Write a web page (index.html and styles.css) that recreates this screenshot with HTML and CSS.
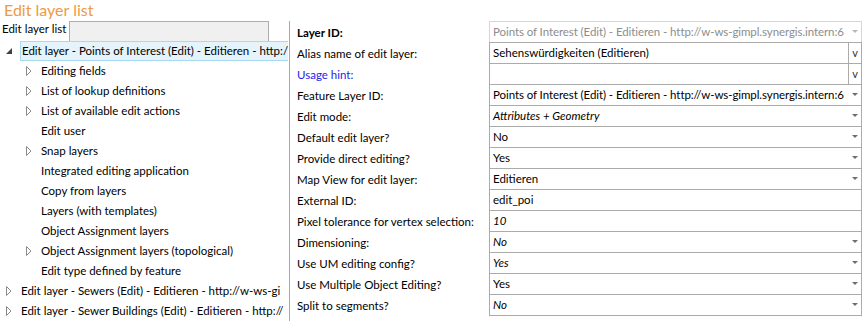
FILE: index.html
```html
<!DOCTYPE html>
<html>
<head>
<meta charset="utf-8">
<link rel="stylesheet" href="styles.css">
</head>
<body>
<div class="title">Edit layer list</div>
<div class="main">
  <div class="left">
    <div class="search">
      <span class="search-label">Edit layer list</span>
      <span class="search-box"></span>
    </div>
    <div class="tree">
      <div class="node root selected"><span class="tw"><svg width="7" height="6" viewBox="0 0 7 6"><polygon points="6,0 6,6 0,6" fill="#404040"/></svg></span><span class="tx">Edit layer - Points of Interest (Edit) - Editieren - http:/</span></div>
      <div class="node child"><span class="tw"><svg width="6" height="10" viewBox="0 0 6 10"><polygon points="0.5,0.5 5,5 0.5,9.5" fill="none" stroke="#8a8a8a"/></svg></span><span class="tx">Editing fields</span></div>
      <div class="node child"><span class="tw"><svg width="6" height="10" viewBox="0 0 6 10"><polygon points="0.5,0.5 5,5 0.5,9.5" fill="none" stroke="#8a8a8a"/></svg></span><span class="tx">List of lookup definitions</span></div>
      <div class="node child"><span class="tw"><svg width="6" height="10" viewBox="0 0 6 10"><polygon points="0.5,0.5 5,5 0.5,9.5" fill="none" stroke="#8a8a8a"/></svg></span><span class="tx">List of available edit actions</span></div>
      <div class="node child"><span class="tw"></span><span class="tx">Edit user</span></div>
      <div class="node child"><span class="tw"><svg width="6" height="10" viewBox="0 0 6 10"><polygon points="0.5,0.5 5,5 0.5,9.5" fill="none" stroke="#8a8a8a"/></svg></span><span class="tx">Snap layers</span></div>
      <div class="node child"><span class="tw"></span><span class="tx">Integrated editing application</span></div>
      <div class="node child"><span class="tw"></span><span class="tx">Copy from layers</span></div>
      <div class="node child"><span class="tw"></span><span class="tx">Layers (with templates)</span></div>
      <div class="node child"><span class="tw"></span><span class="tx">Object Assignment layers</span></div>
      <div class="node child"><span class="tw"><svg width="6" height="10" viewBox="0 0 6 10"><polygon points="0.5,0.5 5,5 0.5,9.5" fill="none" stroke="#8a8a8a"/></svg></span><span class="tx">Object Assignment layers (topological)</span></div>
      <div class="node child"><span class="tw"></span><span class="tx">Edit type defined by feature</span></div>
      <div class="node root"><span class="tw"><svg width="6" height="10" viewBox="0 0 6 10"><polygon points="0.5,0.5 5,5 0.5,9.5" fill="none" stroke="#8a8a8a"/></svg></span><span class="tx">Edit layer - Sewers (Edit) - Editieren - http://w-ws-gi</span></div>
      <div class="node root"><span class="tw"><svg width="6" height="10" viewBox="0 0 6 10"><polygon points="0.5,0.5 5,5 0.5,9.5" fill="none" stroke="#8a8a8a"/></svg></span><span class="tx">Edit layer - Sewer Buildings (Edit) - Editieren - http://</span></div>
    </div>
  </div>
  <div class="right">
    <div class="form">
      <div class="lbl bold">Layer ID:</div>
      <div class="val first disabled"><span class="vt tight">Points of Interest (Edit) - Editieren - http://w-ws-gimpl.synergis.intern:6</span><span class="dd"></span></div>

      <div class="lbl">Alias name of edit layer:</div>
      <div class="val"><span class="vt">Sehenswürdigkeiten (Editieren)</span><span class="vbtn">v</span></div>

      <div class="lbl hint">Usage hint:</div>
      <div class="val"><span class="vt"></span><span class="vbtn">v</span></div>

      <div class="lbl">Feature Layer ID:</div>
      <div class="val"><span class="vt tight">Points of Interest (Edit) - Editieren - http://w-ws-gimpl.synergis.intern:6</span><span class="dd"></span></div>

      <div class="lbl">Edit mode:</div>
      <div class="val"><span class="vt it">Attributes + Geometry</span><span class="dd"></span></div>

      <div class="lbl">Default edit layer?</div>
      <div class="val"><span class="vt">No</span><span class="dd"></span></div>

      <div class="lbl">Provide direct editing?</div>
      <div class="val"><span class="vt">Yes</span><span class="dd"></span></div>

      <div class="lbl">Map View for edit layer:</div>
      <div class="val"><span class="vt">Editieren</span><span class="dd"></span></div>

      <div class="lbl">External ID:</div>
      <div class="val"><span class="vt">edit_poi</span></div>

      <div class="lbl">Pixel tolerance for vertex selection:</div>
      <div class="val"><span class="vt it">10</span></div>

      <div class="lbl">Dimensioning:</div>
      <div class="val"><span class="vt it">No</span><span class="dd"></span></div>

      <div class="lbl">Use UM editing config?</div>
      <div class="val"><span class="vt it">Yes</span><span class="dd"></span></div>

      <div class="lbl">Use Multiple Object Editing?</div>
      <div class="val"><span class="vt">Yes</span><span class="dd"></span></div>

      <div class="lbl">Split to segments?</div>
      <div class="val last"><span class="vt it">No</span><span class="dd"></span></div>
    </div>
  </div>
</div>
</body>
</html>
```
FILE: styles.css
```css
* { box-sizing: border-box; }
html, body {
  margin: 0;
  padding: 0;
  background: #ffffff;
  width: 864px;
  height: 321px;
  overflow: hidden;
}
body {
  font-family: Lato, "Open Sans", sans-serif;
  font-size: 11.5px;
  color: #000;
}
.title {
  height: 21px;
  line-height: 20px;
  padding-left: 4px;
  font-size: 16px;
  color: #ee9a45;
}
.main {
  display: flex;
  height: 300px;
}
.left {
  width: 290px;
  flex: none;
  border-right: 1px solid #a9a9a9;
  overflow: hidden;
}
.search {
  display: flex;
  height: 20px;
  align-items: flex-start;
}
.search-label {
  padding-left: 2px;
  width: 69px;
  flex: none;
  line-height: 16px;
  white-space: nowrap;
}
.search-box {
  width: 200px;
  flex: none;
  height: 21px;
  background: #f0f0f0;
  border: 1px solid #adadad;
}
.tree {
  width: 288px;
  overflow: hidden;
}
.node {
  display: flex;
  align-items: center;
  height: 20px;
  white-space: nowrap;
}
.node .tw {
  width: 14px;
  flex: none;
  display: flex;
  align-items: center;
}
.node .tx {
  padding-left: 1px;
  line-height: 18px;
}
.root { padding-left: 6px; }
.child { padding-left: 26px; }
.selected .tx {
  background: #e5f3fb;
  border: 1px solid #a8d9f3;
  border-right: none;
  height: 20px;
  flex: 1;
  padding-left: 1px;
}
.right {
  flex: 1;
  padding-left: 7px;
}
.form {
  display: grid;
  grid-template-columns: 192px 373px;
  grid-auto-rows: 21px;
}
.lbl {
  line-height: 21px;
  padding-top: 1px;
  white-space: nowrap;
}
.bold { font-weight: bold; }
.hint { color: #2424e6; }
.val {
  display: flex;
  border-left: 1px solid #ababab;
  border-right: 1px solid #ababab;
  border-top: 1px solid #ababab;
  height: 21px;
}
.val.last {
  height: 22px;
  border-bottom: 1px solid #ababab;
}
.val.disabled {
  border-color: #d6d6d6;
  color: #8d8d8d;
}
.vt {
  flex: 1;
  padding-left: 3px;
  line-height: 19px;
  white-space: nowrap;
}
.tight { letter-spacing: -0.08px; }
.it { font-style: italic; }
.dd {
  width: 12px;
  flex: none;
  position: relative;
}
.dd::after {
  content: "";
  position: absolute;
  left: 3px;
  top: 8px;
  border-left: 3px solid transparent;
  border-right: 3px solid transparent;
  border-top: 3px solid #6e6e6e;
}
.disabled .dd::after { border-top-color: #b8b8b8; }
.vbtn {
  width: 13px;
  flex: none;
  border-left: 1px solid #ababab;
  text-align: center;
  line-height: 19px;
  font-size: 11px;
  color: #333;
}
```
